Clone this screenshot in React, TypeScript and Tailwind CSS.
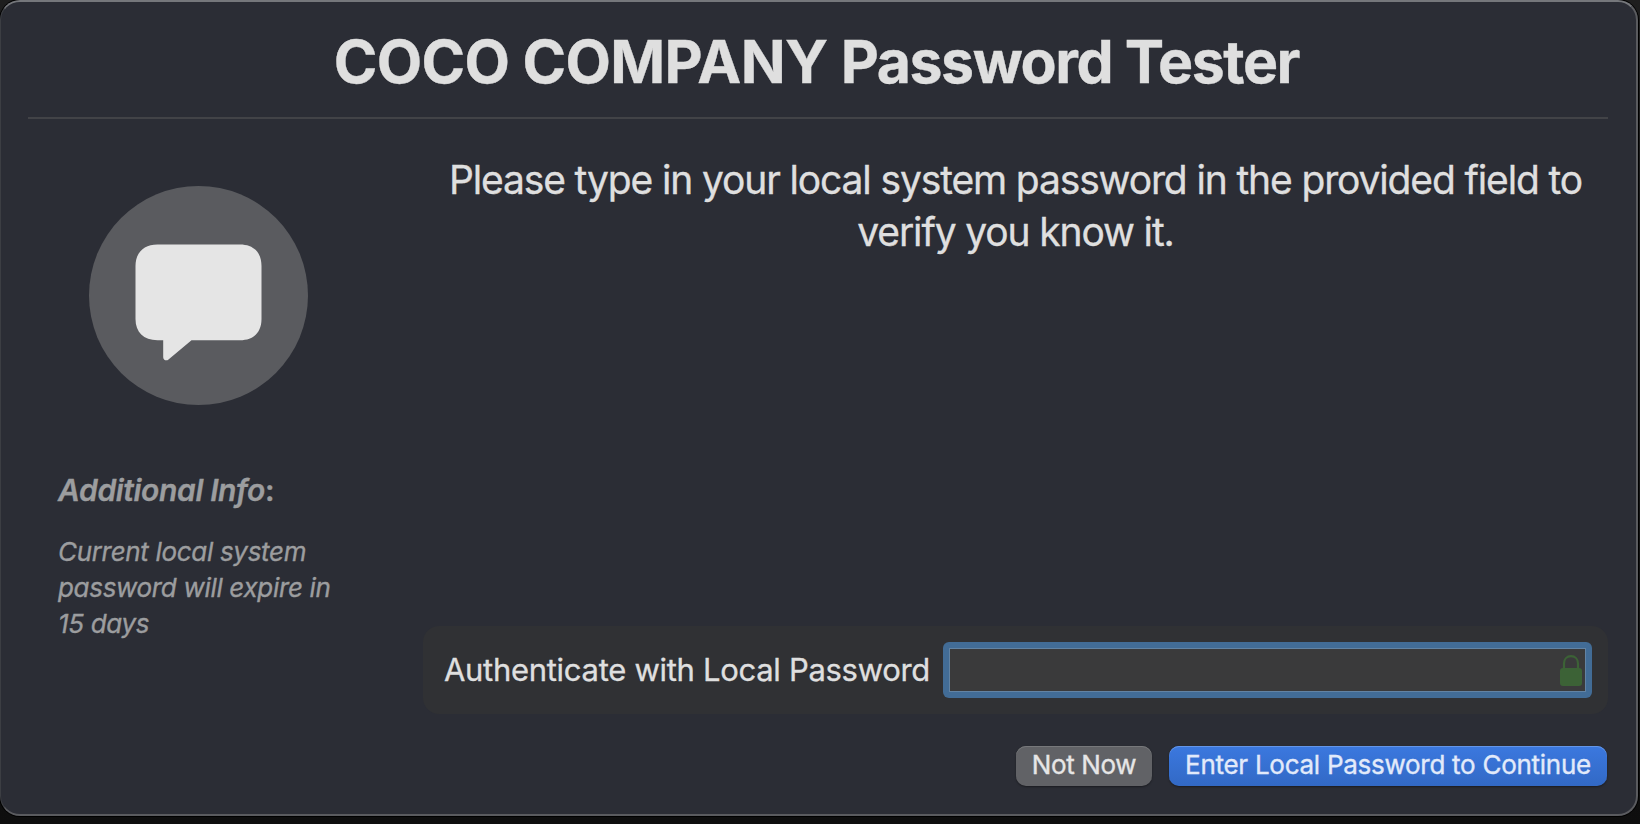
import React from "react";

function SpeechBubble() {
  return (
    <svg viewBox="0 0 219 219" className="h-[219px] w-[219px]" aria-hidden="true">
      <circle cx="109.5" cy="109.5" r="109.5" fill="#5a5b5f" />
      <path
        fill="#e5e5e5"
        d="M68.5 58.5H151C165 58.5 172.5 67 172.5 80V133C172.5 146 165 154.2 151 154.2H102.5L79.5 173.4C77.5 175.1 74.2 174.3 74.2 171.2V154.2H68.5C54.500 154.200 46.500 146 46.500 133V80C46.500 67 54.500 58.500 68.500 58.500Z"
      />
    </svg>
  );
}

function Lock() {
  return (
    <svg viewBox="0 0 22 32" className="h-8 w-[22px]" aria-hidden="true">
      <path d="M4 14V8.500C4 4 7 1.200 11 1.200S18 4 18 8.500V14" fill="none" stroke="#3c6236" strokeWidth="2.200" />
      <rect x="0" y="13" width="22" height="18" rx="3" fill="#3c6236" />
    </svg>
  );
}

export default function App() {
  return (
    <div className="h-[824px] w-[1640px] overflow-hidden bg-linear-to-b from-[#1e1e1e] to-[#0e0e0e] font-['Inter',sans-serif] text-[#dfdfdf] [-webkit-text-stroke:0.35px]">
      <div className="flex h-[816px] w-[1638px] flex-col rounded-[20px] border-y-2 border-r-2 border-l border-t-[#75777b] border-r-[#5a5b5f] border-b-[#5a5b5f] border-l-[#3c3e43] bg-[#2b2d35] shadow-[0_0_0_1px_#000]">
        <header className="mr-7 ml-[27px] flex h-[117px] shrink-0 justify-center border-b-2 border-[#424347] pt-[24px] pr-[3px]">
          <h1 className="h-[72px] text-[59px] leading-[72px] font-bold tracking-[-1.45px] whitespace-nowrap">
            <span className="tracking-[-0.68px]">COCO COMPANY </span>Password Tester
          </h1>
        </header>

        <div className="mr-7 ml-[27px] flex h-[595px] shrink-0">
          <aside className="w-[395px] shrink-0 text-[#9c9d9f]">
            <div className="pt-[67px] pl-[61px]">
              <SpeechBubble />
            </div>
            <h2 className="mt-[67px] pl-[30px] text-[30px] leading-9 font-semibold tracking-[-0.35px] whitespace-nowrap">
              <em>Additional Info</em>:
            </h2>
            <p className="mt-[26px] pl-[30px] text-[26px] leading-9 tracking-[-0.32px] whitespace-nowrap italic">
              Current local system
              <br />
              password will expire in
              <br />
              15 days
            </p>
          </aside>

          <main className="flex flex-1 flex-col justify-between">
            <p className="pt-[35px] text-center text-[39px] leading-[52px] tracking-[-1.14px] whitespace-nowrap">
              Please type in your local system password in the provided field to
              <br />
              verify you know it.
            </p>
            <label className="flex h-[88px] items-center justify-between rounded-[16px] bg-[#303134] pr-4 pl-[21px]">
              <span className="text-[31px] leading-10 tracking-[-0.3px] whitespace-nowrap">
                Authenticate with Local Password
              </span>
              <span className="flex h-14 w-[649px] rounded-[6px] bg-[#426c96] p-[6px]">
                <span className="flex flex-1 items-center justify-end border border-[#6283a3] bg-[#3a3a3b] pt-[2px] pr-[3px]">
                  <Lock />
                </span>
              </span>
            </label>
          </main>
        </div>

        <footer className="mr-[29px] flex justify-end gap-[17px] pt-8">
          <button className="h-10 w-[136px] rounded-[10px] bg-[#616266] pb-[2px] text-[26px] leading-9 tracking-[-0.35px] whitespace-nowrap text-[#e6e6e6] shadow-[inset_0_1px_0_#77787b,0_1px_2px_#0006]">
            Not Now
          </button>
          <button className="h-10 w-[438px] rounded-[10px] bg-linear-to-b from-[#3b78df] to-[#3269c5] pb-[2px] text-[26px] leading-9 tracking-[-0.27px] whitespace-nowrap text-[#e2eafa] shadow-[inset_0_1px_0_#6496e8,0_1px_2px_#0006]">
            Enter Local Password to Continue
          </button>
        </footer>
      </div>
    </div>
  );
}
